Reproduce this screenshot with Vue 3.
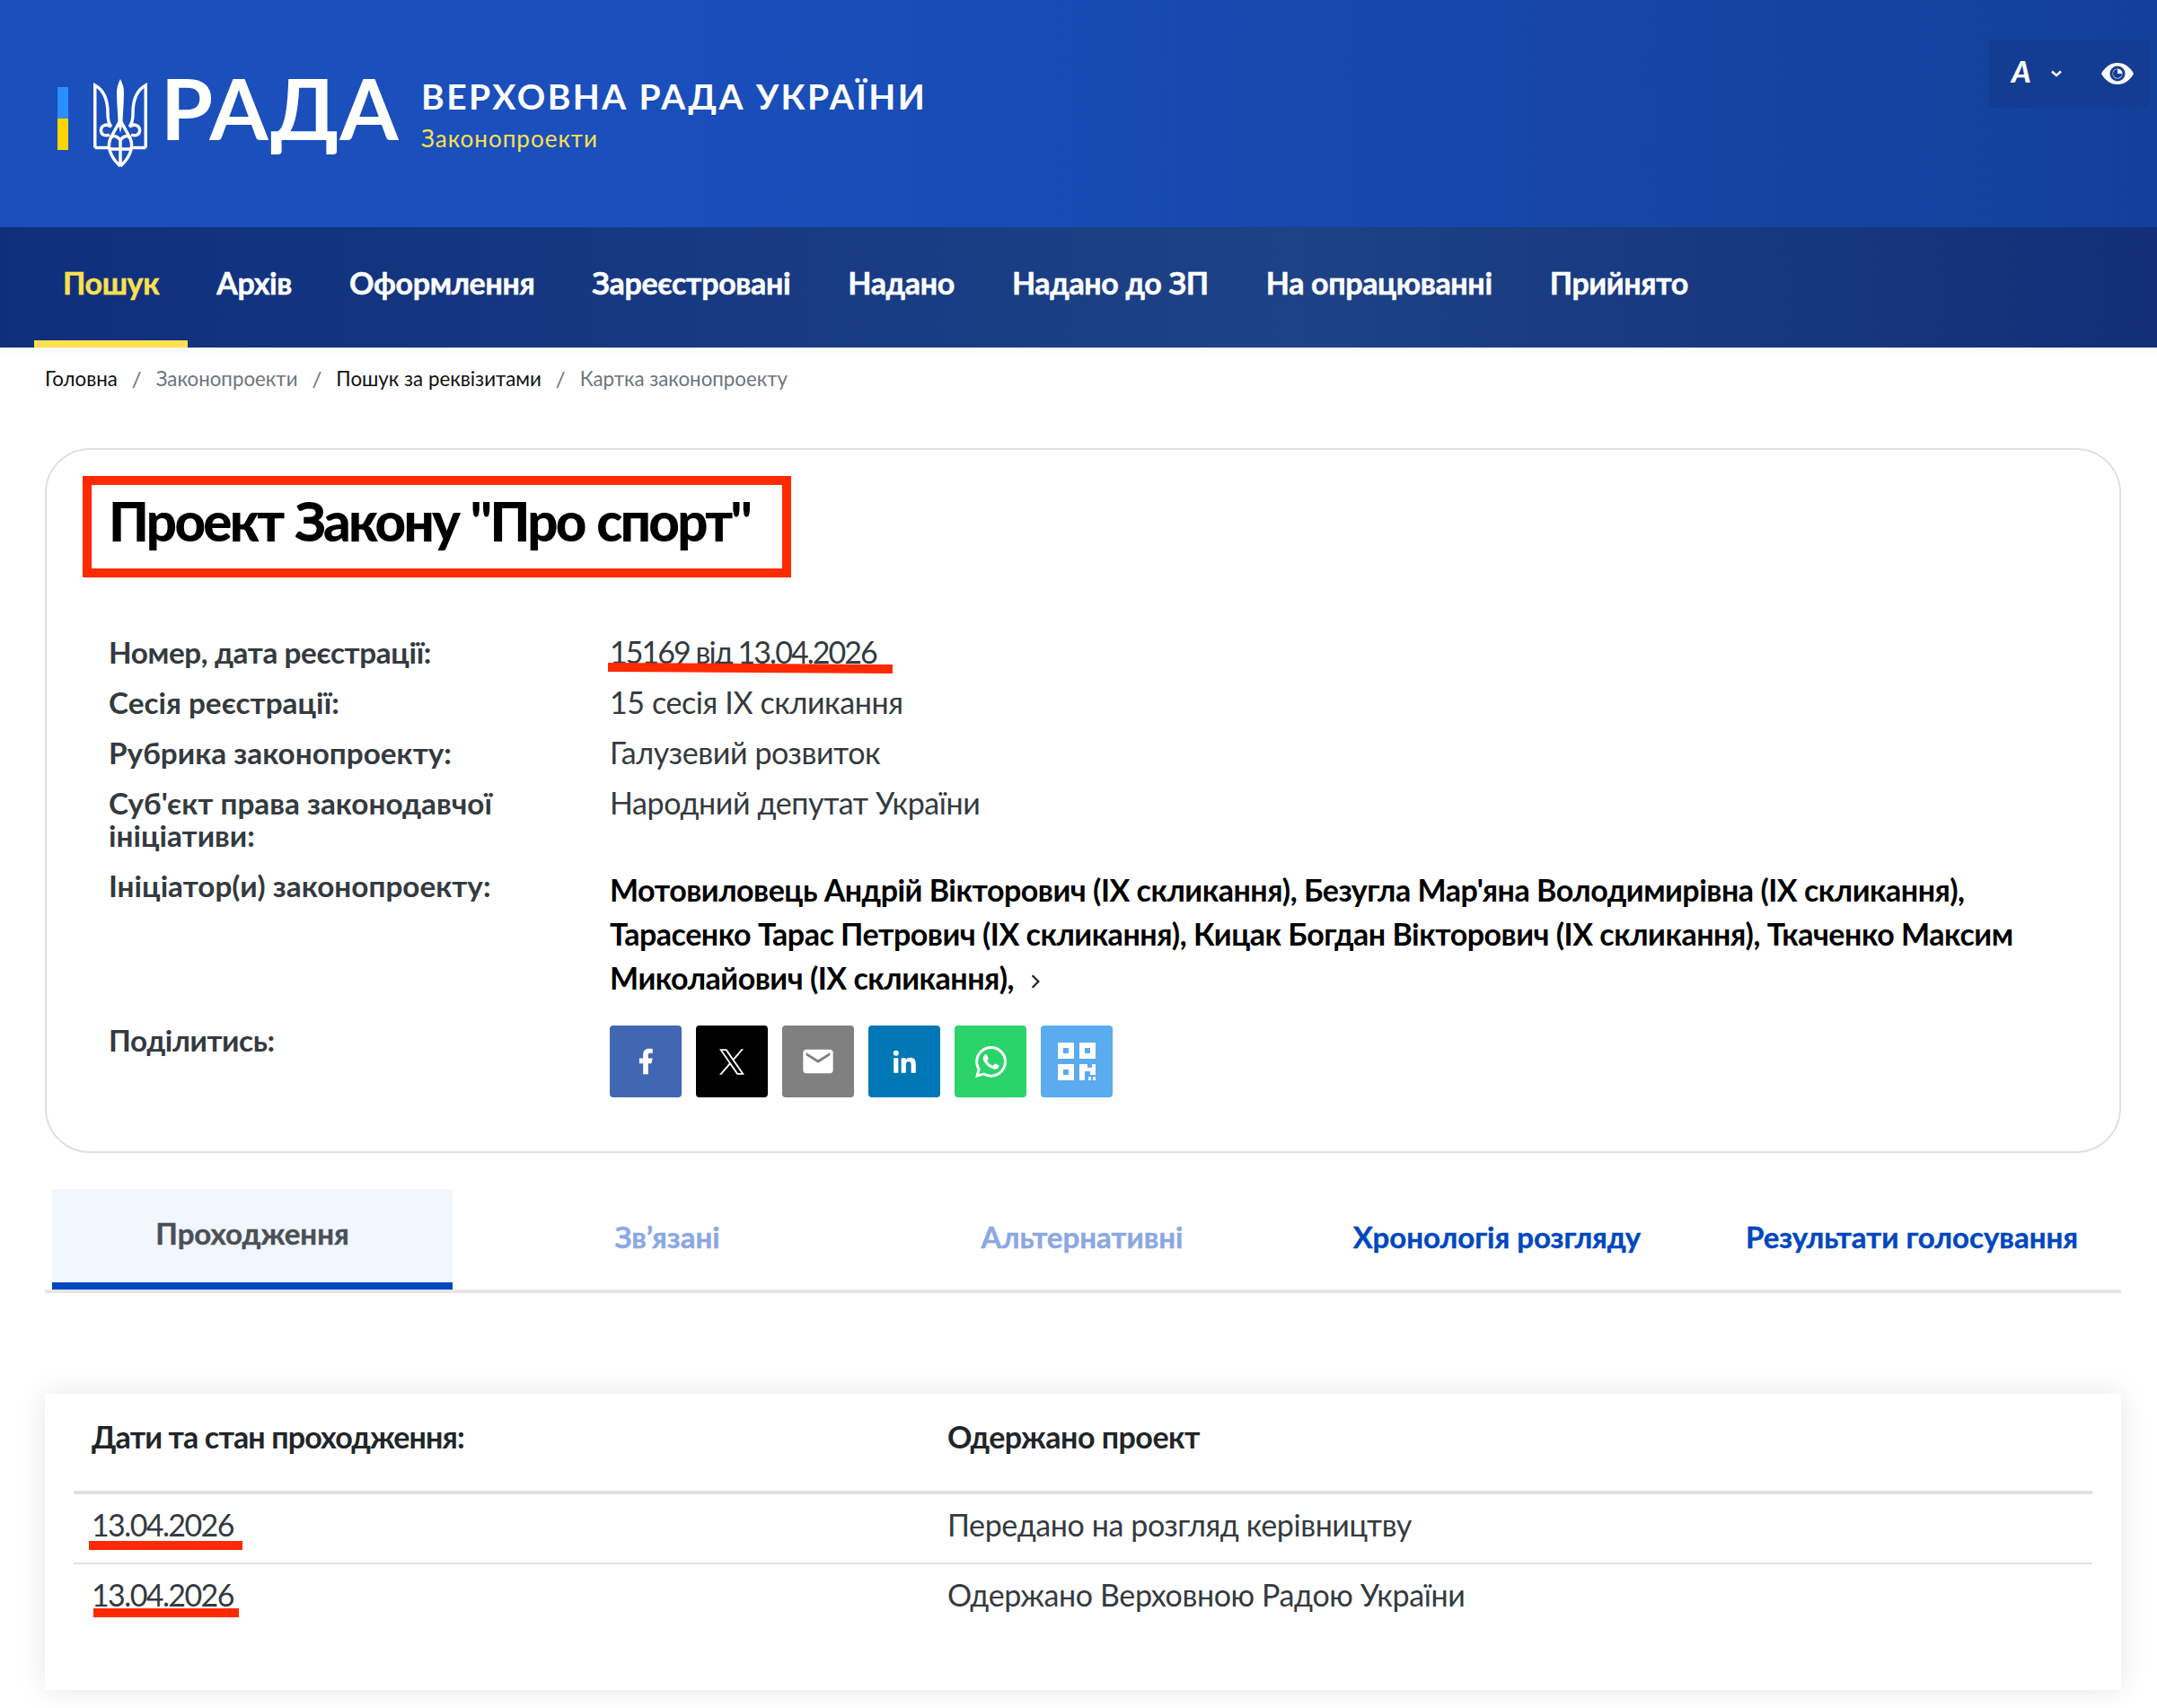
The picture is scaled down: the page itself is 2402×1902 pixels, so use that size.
<script setup>
const navItems = ['Пошук', 'Архів', 'Оформлення', 'Зареєстровані', 'Надано', 'Надано до ЗП', 'На опрацюванні', 'Прийнято']

const tabs = [
  { title: 'Проходження', state: 'active' },
  { title: 'Зв’язані', state: 'muted' },
  { title: 'Альтернативні', state: 'muted' },
  { title: 'Хронологія розгляду', state: '' },
  { title: 'Результати голосування', state: '' }
]
</script>

<template>
  <div class="page">
    <!-- Header -->
    <header class="top">
      <div class="flag"></div>
      <svg class="trident" viewBox="0 0 60 99" fill="none" stroke="#fff" stroke-width="3.500">
        <path d="M30 0 C33 6 34 10 34 15 C34 28 32.500 40 32.500 50 L30 60 L27.500 50 C27.500 40 26 28 26 15 C26 10 27 6 30 0Z" fill="#fff" stroke="none" />
        <g>
          <path d="M1.750 76.500 V7 C11 12 16 22 16 38 C16 45 17 50 20 53 C14 49 8 52 8.500 58 C9 62 13 64 18 62" />
          <path d="M1.750 76.500 H17" />
          <path d="M30 46 L19 66 C14 78 22 90 30 97" />
          <path d="M30 68 C26 63 21 62 19 66" />
        </g>
        <g transform="matrix(-1 0 0 1 60 0)">
          <path d="M1.750 76.500 V7 C11 12 16 22 16 38 C16 45 17 50 20 53 C14 49 8 52 8.500 58 C9 62 13 64 18 62" />
          <path d="M1.750 76.500 H17" />
          <path d="M30 46 L19 66 C14 78 22 90 30 97" />
          <path d="M30 68 C26 63 21 62 19 66" />
        </g>
        <path d="M30 68 V97 M17 78 H43" />
      </svg>
      <div class="rada">РАДА</div>
      <div class="brand">
        <div class="brand-title">ВЕРХОВНА РАДА УКРАЇНИ</div>
        <div class="brand-sub">Законопроекти</div>
      </div>
      <div class="tools">
        <span class="font-a">A</span>
        <svg class="chev" viewBox="0 0 12 8" fill="none" stroke="#fff" stroke-width="2.500"><path d="M1 1.500l5 4.500 5-4.500" /></svg>
        <svg class="eye" viewBox="0 0 36 24">
          <path d="M0 12C4 4.500 10.500 0 18 0s14 4.500 18 12c-4 7.500-10.500 12-18 12S4 19.500 0 12z" fill="#fff" />
          <circle cx="18" cy="12" r="8.500" fill="#153c93" />
          <circle cx="18" cy="12" r="5.500" fill="#fff" />
          <path d="M18 7a5 5 0 1 0 5 5h-5z" fill="#153c93" />
        </svg>
      </div>
    </header>

    <!-- Nav -->
    <nav class="menu">
      <a v-for="(item, i) in navItems" :key="item" class="menu-item" :class="{ active: i === 0 }">{{ item }}</a>
    </nav>

    <!-- Breadcrumbs -->
    <div class="crumbs">
      <span class="crumb dark">Головна</span><span class="sep">/</span>
      <span class="crumb">Законопроекти</span><span class="sep">/</span>
      <span class="crumb dark">Пошук за реквізитами</span><span class="sep">/</span>
      <span class="crumb">Картка законопроекту</span>
    </div>

    <!-- Bill card -->
    <section class="card">
      <h1 class="title">Проект Закону "Про спорт"</h1>
      <div class="row">
        <div class="label tight">Номер, дата реєстрації:</div>
        <div class="value"><span class="mark mark-tilt">15169 від 13.04.2026</span></div>
      </div>
      <div class="row">
        <div class="label">Сесія реєстрації:</div>
        <div class="value">15 сесія IX скликання</div>
      </div>
      <div class="row">
        <div class="label">Рубрика законопроекту:</div>
        <div class="value">Галузевий розвиток</div>
      </div>
      <div class="row">
        <div class="label">Суб'єкт права законодавчої<br />ініціативи:</div>
        <div class="value">Народний депутат України</div>
      </div>
      <div class="row row-authors">
        <div class="label">Ініціатор(и) законопроекту:</div>
        <div class="authors">
          Мотовиловець Андрій Вікторович (IX скликання), Безугла Мар'яна Володимирівна (IX скликання),<br />
          Тарасенко Тарас Петрович (IX скликання), Кицак Богдан Вікторович (IX скликання), Ткаченко Максим<br />
          Миколайович (IX скликання),
          <svg class="more" viewBox="0 0 10 16" fill="none" stroke="#222" stroke-width="2"><path d="M2 2l6 6-6 6" /></svg>
        </div>
      </div>
      <div class="row row-share">
        <div class="label tight">Поділитись:</div>
        <div class="share">
          <a class="btn fb">
            <svg width="34" height="34" viewBox="0 0 24 24" fill="#fff"><path d="M14 13.500h2.500l1-4H14v-2c0-1.030 0-2 2-2h1.500V2.140c-.326-.043-1.557-.14-2.857-.14C11.928 2 10 3.657 10 6.700v2.800H7v4h3V22h4v-8.500z" /></svg>
          </a>
          <a class="btn tw">
            <svg width="28" height="29" viewBox="0 0 1200 1227" fill="#fff"><path d="M714.163 519.284L1160.890 0H1055.030L667.137 450.887L357.328 0H0L468.492 681.821L0 1226.370H105.866L515.491 750.218L842.672 1226.370H1200L714.137 519.284H714.163ZM569.165 687.828L521.697 619.934L144.011 79.694H306.615L611.412 515.685L658.880 583.579L1055.080 1150.300H892.476L569.165 687.854V687.828Z" /></svg>
          </a>
          <a class="btn mail">
            <svg width="40" height="40" viewBox="0 0 24 24" fill="#fff"><path d="M20 4H4c-1.100 0-2 .9-2 2v12c0 1.100.9 2 2 2h16c1.100 0 2-.9 2-2V6c0-1.100-.9-2-2-2zm0 4l-8 5-8-5V6l8 5 8-5v2z" /></svg>
          </a>
          <a class="btn li">
            <svg width="35" height="35" viewBox="0 0 24 24" fill="#fff"><path d="M20.447 20.452h-3.554v-5.569c0-1.328-.027-3.037-1.852-3.037-1.853 0-2.136 1.445-2.136 2.939v5.667H9.351V9h3.414v1.561h.046c.477-.9 1.637-1.850 3.370-1.850 3.601 0 4.267 2.370 4.267 5.455v6.286zM5.337 7.433a2.062 2.062 0 01-2.063-2.065 2.064 2.064 0 112.063 2.065zm1.782 13.019H3.555V9h3.564v11.452z" /></svg>
          </a>
          <a class="btn wa">
            <svg width="35" height="35" viewBox="0 0 24 24" fill="#fff"><path d="M17.472 14.382c-.297-.149-1.758-.867-2.030-.967-.273-.099-.471-.148-.67.150-.197.297-.767.966-.94 1.164-.173.199-.347.223-.644.075-.297-.150-1.255-.463-2.390-1.475-.883-.788-1.480-1.761-1.653-2.059-.173-.297-.018-.458.130-.606.134-.133.298-.347.446-.520.149-.174.198-.298.298-.497.099-.198.050-.371-.025-.520-.075-.149-.669-1.612-.916-2.207-.242-.579-.487-.5-.669-.510-.173-.008-.371-.010-.570-.010-.198 0-.520.074-.792.372-.272.297-1.040 1.016-1.040 2.479 0 1.462 1.065 2.875 1.213 3.074.149.198 2.096 3.200 5.077 4.487.709.306 1.262.489 1.694.625.712.227 1.360.195 1.871.118.571-.085 1.758-.719 2.006-1.413.248-.694.248-1.289.173-1.413-.074-.124-.272-.198-.570-.347m-5.421 7.403h-.004a9.870 9.870 0 01-5.031-1.378l-.361-.214-3.741.982.998-3.648-.235-.374a9.860 9.860 0 01-1.510-5.260c.001-5.450 4.436-9.884 9.888-9.884 2.640 0 5.122 1.030 6.988 2.898a9.825 9.825 0 012.893 6.994c-.003 5.450-4.437 9.884-9.885 9.884m8.413-18.297A11.815 11.815 0 0012.050 0C5.495 0 .16 5.335.157 11.892c0 2.096.547 4.142 1.588 5.945L.057 24l6.305-1.654a11.882 11.882 0 005.683 1.448h.005c6.554 0 11.890-5.335 11.893-11.893a11.821 11.821 0 00-3.480-8.413z" /></svg>
          </a>
          <a class="btn qr">
            <svg width="42" height="42" viewBox="0 0 42 42" fill="#fff">
              <path fill-rule="evenodd" d="M0 0h18v18H0zM6 6v6h6V6zM24 0h18v18H24zM30 6v6h6V6zM0 24h18v18H0zM6 30v6h6v-6z" />
              <path d="M24 24h9v4h5v-4h4v12h-6v-4h-6v10h-6zM34 38h3v4h-3zM39 38h3v4h-3z" />
            </svg>
          </a>
        </div>
      </div>
    </section>

    <!-- Tabs -->
    <div class="tabs">
      <div v-for="tab in tabs" :key="tab.title" class="tab" :class="tab.state">{{ tab.title }}</div>
    </div>

    <!-- Stages -->
    <section class="stages">
      <div class="stage-row stage-head">
        <div class="col-date">Дати та стан проходження:</div>
        <div class="col-head">Одержано проект</div>
      </div>
      <div class="stage-row">
        <div class="col-date"><span class="mark mark-wide">13.04.2026</span></div>
        <div>Передано на розгляд керівництву</div>
      </div>
      <div class="stage-row">
        <div class="col-date"><span class="mark mark-narrow">13.04.2026</span></div>
        <div>Одержано Верховною Радою України</div>
      </div>
    </section>
  </div>
</template>

<style>
body {
  background: #fff;
}
</style>

<style scoped>
.page {
  width: 2402px;
  height: 1902px;
  overflow: hidden;
  font-family: "Lato", "Noto Sans", sans-serif;
  color: #212529;
  background: #fff;
}

/* Header */
.top {
  height: 253px;
  display: flex;
  align-items: flex-start;
  background: linear-gradient(90deg, #1a4fbc 0%, #1a4fbc 30%, #12409b 100%);
  color: #fff;
}

.flag {
  width: 12px;
  height: 70px;
  margin: 97px 0 0 64px;
  background: linear-gradient(#2b8fff 50%, #ffd500 50%);
}

.trident {
  width: 60px;
  height: 99px;
  margin: 88px 0 0 28px;
}

.rada {
  width: 290px;
  margin: 66px 0 0 15px;
  font-size: 94px;
  line-height: 108px;
  font-weight: 700;
  letter-spacing: 1px;
}

.brand {
  margin: 84px 0 0 0;
}

.brand-title {
  font-size: 39px;
  line-height: 46px;
  font-weight: 700;
  letter-spacing: 2.450px;
}

.brand-sub {
  margin-top: 7px;
  font-size: 26px;
  line-height: 34px;
  color: #ffe04f;
  letter-spacing: 1px;
}

.tools {
  width: 178px;
  height: 76px;
  margin: 44px 9px 0 auto;
  display: flex;
  align-items: center;
  background: #153c93;
}

.font-a {
  width: 30px;
  margin: 0 0 6px 25px;
  font-size: 33px;
  font-weight: 900;
  font-style: italic;
}

.chev {
  width: 12px;
  height: 8px;
  margin-left: 14px;
}

.eye {
  width: 36px;
  height: 24px;
  margin-left: 44px;
}

/* Nav */
.menu {
  height: 134px;
  display: flex;
  padding-left: 38px;
  background: linear-gradient(90deg, #0f2f7d 0%, #1d4286 60%, #122f78 100%);
}

.menu-item {
  padding: 0 32px;
  line-height: 124px;
  height: 134px;
  box-sizing: border-box;
  font-size: 34px;
  font-weight: 700;
  letter-spacing: -0.350px;
  -webkit-text-stroke: 0.500px currentColor;
  color: #fff;
  white-space: nowrap;
}

.menu-item.active {
  color: #ffe04f;
  border-bottom: 8px solid #ffe04f;
}

/* Breadcrumbs */
.crumbs {
  height: 112px;
  box-sizing: border-box;
  padding: 19px 0 0 50px;
  display: flex;
  font-size: 22.300px;
  line-height: 32px;
  color: #6c757d;
  background: linear-gradient(#f8f8f8, #fff 10px);
}

.crumb.dark {
  color: #111;
}

.sep {
  margin: 0 16px;
  font-size: 24px;
}

/* Card */
.card {
  margin: 0 40px 0 50px;
  height: 785px;
  box-sizing: border-box;
  border: 2px solid #e0e0e0;
  border-radius: 50px;
  padding: 29px 0 0 69px;
}

.title {
  display: block;
  width: 789px;
  box-sizing: border-box;
  margin: 0 0 55px -29px;
  padding: 0 0 12px 19px;
  border: 10px solid #ff2a00;
  font-size: 60px;
  line-height: 81px;
  font-weight: 900;
  letter-spacing: -2.700px;
  word-spacing: 2px;
  color: #000;
  white-space: nowrap;
}

.row {
  display: flex;
}

.label {
  width: 558px;
  flex: none;
  padding: 10px 0;
  font-size: 33.300px;
  line-height: 36px;
  font-weight: 700;
  color: #343a40;
}

.label.tight {
  letter-spacing: -0.400px;
}

.value {
  padding: 10px 0;
  font-size: 34px;
  line-height: 36px;
  letter-spacing: -0.400px;
  color: #343a40;
}

.mark {
  position: relative;
  display: inline-block;
}

.mark::after {
  content: "";
  position: absolute;
  height: 10px;
  background: #ff2a00;
}

.mark-tilt {
  letter-spacing: -1.950px;
}

.mark-tilt::after {
  left: -2px;
  width: 317px;
  top: 31px;
  transform: rotate(0.4deg);
}

.mark-wide,
.mark-narrow {
  letter-spacing: -1.600px;
}

.mark-wide::after {
  left: -3px;
  width: 171px;
  top: 52px;
}

.mark-narrow::after {
  left: 2px;
  width: 162px;
  top: 49px;
}

.authors {
  padding: 8px 0 10px;
  font-size: 34px;
  line-height: 49px;
  font-weight: 700;
  letter-spacing: -0.480px;
  color: #000;
  white-space: nowrap;
}

.more {
  width: 12px;
  height: 18px;
  margin-left: 10px;
}

.row-share {
  margin-top: 7px;
}

.share {
  display: flex;
  gap: 16px;
  padding-top: 12px;
}

.btn {
  width: 80px;
  height: 80px;
  border-radius: 4px;
  display: flex;
  align-items: center;
  justify-content: center;
}

.fb { background: #4267b2; }
.tw { background: #000; }
.mail { background: #808080; }
.li { background: #0077b5; }
.wa { background: #2ad46a; }
.qr { background: #5aabf0; }

/* Tabs */
.tabs {
  margin: 40px 40px 0 50px;
  padding: 0 8px;
  display: flex;
  gap: 16px;
  height: 116px;
  box-sizing: border-box;
  border-bottom: 4px solid #e5e5ea;
}

.tab {
  width: 446px;
  height: 112px;
  box-sizing: border-box;
  text-align: center;
  font-size: 33px;
  line-height: 107px;
  font-weight: 700;
  -webkit-text-stroke: 0.400px currentColor;
  color: #0047c0;
  white-space: nowrap;
}

.tab.active {
  background: #f2f6fd;
  border-bottom: 8px solid #0047c0;
  line-height: 98px;
  color: #495057;
}

.tab.muted {
  color: #8ba8e3;
}

/* Stages */
.stages {
  margin: 112px 40px 0 50px;
  height: 330px;
  box-sizing: border-box;
  padding: 0 32px;
  background: #fff;
  box-shadow: 0 0 30px rgba(0, 0, 0, 0.1);
  font-size: 34px;
  letter-spacing: -0.400px;
  color: #343a40;
}

.stage-row {
  display: flex;
  height: 78px;
  padding: 0 20px;
  line-height: 68px;
  border-top: 2px solid #dee2e6;
  box-sizing: border-box;
}

.stage-head {
  height: 110px;
  line-height: 96px;
  border-top: none;
  border-bottom: 2px solid #dee2e6;
  font-weight: 700;
  letter-spacing: -0.860px;
  color: #212529;
}

.col-head {
  letter-spacing: -0.500px;
}

.col-date {
  width: 953px;
  flex: none;
}
</style>
